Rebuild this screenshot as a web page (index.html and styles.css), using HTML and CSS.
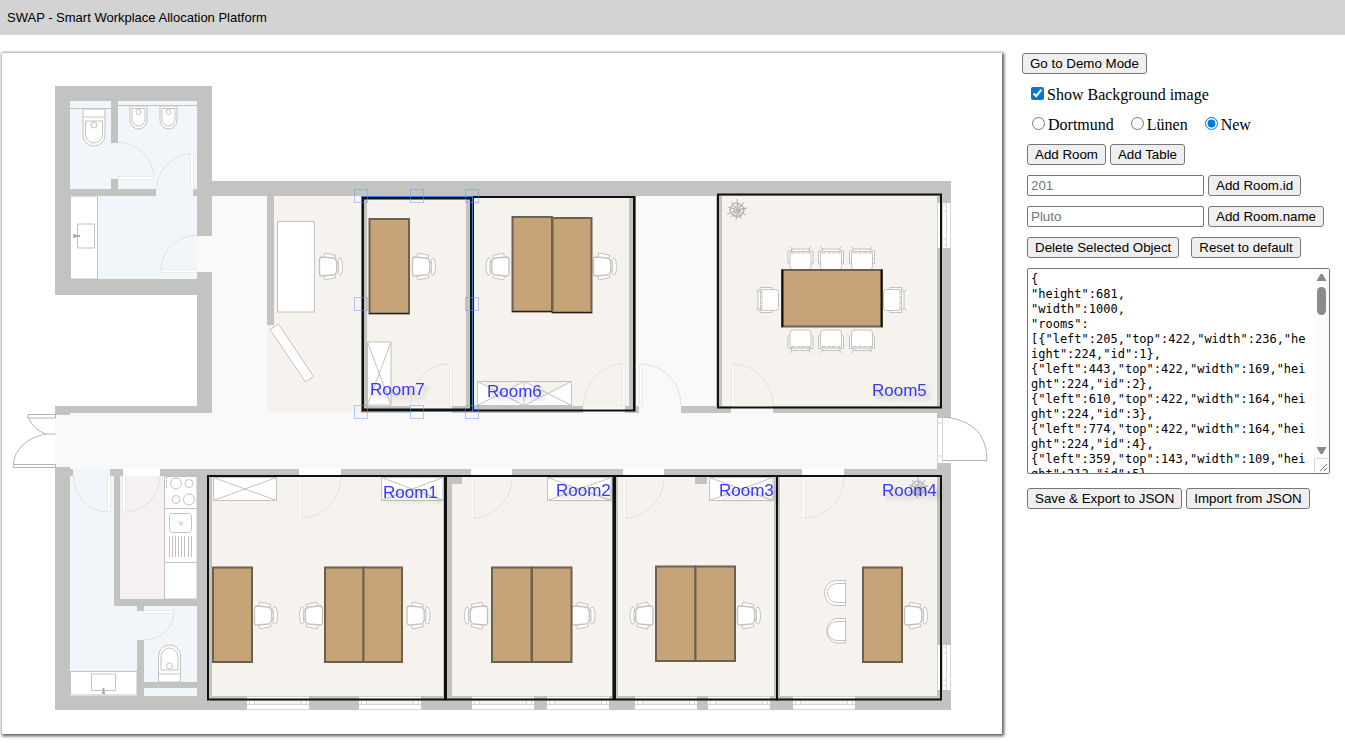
FILE: index.html
```html
<!DOCTYPE html>
<html lang="en">
<head>
<meta charset="utf-8">
<title>SWAP - Smart Workplace Allocation Platform</title>
<link rel="stylesheet" href="styles.css">
</head>
<body>
<header class="topbar">SWAP - Smart Workplace Allocation Platform</header>
<main class="workspace">
<svg class="plan" viewBox="2 53 1000 681" role="img" aria-label="Floor plan">
  <defs>
    <g id="chair" class="furn">
      <path d="M5-10L6-13.500L17-11L16-8.500M5 10L6 13.500L17 11L16 8.500"/>
      <path d="M19-7Q20-9 21.500-8.500Q23.500-6 23.500 0Q23.500 6 21.500 8.500Q20 9 19 7Q20.500 0 19-7ZM17.500-4H20M17.500 4H20"/>
      <path d="M3-9.500L14-8.500Q17-8 17.500-5Q18 0 17.500 5Q17 8 14 8.500L3 9.500Q.5 9.500 .5 6.500V-6.500Q.5-9.500 3-9.500Z" stroke-width="1.300"/>
    </g>
    <g id="meet" class="furn">
      <path d="M-9-20.500H9V-18H-9ZM-12.500-18.500H-10V-6H-12.500ZM12.500-18.500H10V-6H12.500ZM-10.500-23L-7.500-19.500M10.500-23L7.500-19.500"/>
      <rect x="-10.500" y="-18" width="21" height="18" rx="3"/>
      <path d="M-9-16.500H9" stroke-dasharray="4 1"/>
    </g>
    <g id="plant" class="plant">
      <circle r="7"/><circle r="3.500"/>
      <path d="M0-11L1 0L7-8M1 0L10-2L1 0L9 5M1 0L4 9M1 0L-1 10M1 0L-6 7M1 0L-10 4M1 0L-9-3M1 0L-6-8M-3-7L3-5L7-2L6 3L2 6L-4 5L-7 1L-5-4Z"/>
    </g>
    <g id="bidet" class="furn">
      <path d="M-8.500 0V14A8.500 9 0 0 0 8.500 14V0Z"/><path d="M-6.500 2.500H6.500V13A6.500 7 0 0 1-6.500 13Z"/><circle cy="6" r="2.500"/>
    </g>
    <g id="window">
      <path class="pane" d="M0 0H62V14H0Z"/>
      <path class="sill" d="M8 5H54V8H8Z"/>
      <path class="wline" d="M0 .5H62M0 4.500H62M0 8.500H62M2.500 4V9M7.500 4V9M54.500 4V9M59.500 4V9M0 13.500H62"/>
    </g>
    <g id="toilet" class="furn">
      <path d="M-11 0H11V26A11 11 0 0 1-11 26Z"/><path d="M-11 8H11M-8.500 12H8.500V25A8.500 9 0 0 1-8.500 25Z"/><circle cy="16" r="3"/>
    </g>
  </defs>

  <!-- floors -->
  <path class="hall" d="M212 196H268V413H937V469H55V413H212ZM629 196H722V413H629ZM937 413H943V463H937Z"/>
  <path class="water" d="M70 101H197V279H70ZM70 476H114V606H197V696H70Z"/>
  <path class="water" d="M73 469H110V476H73Z"/>
  <path class="kitchen" d="M120 476H197V599H120Z"/>
  <path class="office" d="M267 196H629V413H267ZM722 196H937V407H722ZM212 476H937V696H212Z"/>

  <!-- walls -->
  <path class="wall" fill-rule="evenodd" d="M55 86H212V181H951V418H937V196H212V236H197V101H70V279H197V272H212V413H70V415H55V406H197V295H55Z"/>
  <path class="wall" d="M55 467H70V469H73V476H70V696H951V710H55ZM937 463H951V710H937ZM111 101H118V143H111ZM111 179H118V190H111ZM70 189H156V196H70ZM193 189H197V196H193Z"/>
  <path class="wall" d="M267 196H274V325H267ZM361 196H367V413H361ZM466 196H474V413H466ZM629 196H636V413H629ZM716 196H722V413H716ZM361 406H410V413H361ZM452 406H583V413H452ZM625 406H639V413H625ZM681 406H731V413H681ZM773 406H951V413H773Z"/>
  <path class="wall" d="M110 469H123V476H110ZM160 469H299V476H160ZM341 469H471V476H341ZM512 469H623V476H512ZM664 469H802V476H664ZM844 469H951V476H844ZM114 476H120V606H114ZM114 599H197V606H114ZM197 476H212V696H197ZM137 606H144V611H137ZM137 640H144V696H137ZM144 682H197V688H144ZM443 476H452V696H443ZM447 476H462V484H447ZM612 476H618V696H612ZM695 476H707V484H695ZM774 476H780V696H774Z"/>
  <path class="hall" d="M197 236H212V272H197ZM583 407H625V413H583ZM639 407H681V413H639ZM410 407H449V413H410ZM731 407H773V413H731Z"/>
  <path class="water" d="M144 688H197V695H144Z"/>

  <!-- windows -->
  <use href="#window" x="247" y="696"/><use href="#window" x="359" y="696"/>
  <use href="#window" x="472" y="696"/><use href="#window" x="547" y="696"/>
  <use href="#window" x="635" y="696"/><use href="#window" x="708" y="696"/>
  <use href="#window" x="793" y="696"/>
  <path class="pane" d="M937 203H951V248H937ZM937 645H951V690H937ZM937 418H945V463H937Z"/>
  <path class="wline" d="M937.500 203V248M942.500 203V248M946.500 203V248M950.500 203V248M942 205H946M942 211H946M942 239H946M942 245H946M937.500 645V690M942.500 645V690M946.500 645V690M950.500 645V690M942 647H946M942 653H946M942 680H946M942 686H946M937.500 418V463M942.500 418V463M937 423H943M937 456H943"/>

  <!-- doors -->
  <path class="door" d="M118 142A37 37 0 0 1 154 176M156.500 190A36 36 0 0 1 190 154M161 270A35 35 0 0 1 197 235.500M410.500 406A38 42 0 0 1 449 364M583.500 406A40 42 0 0 1 622 364M642 364A40 42 0 0 1 681 406M734 364A40 42 0 0 1 773 406M73.500 476A35 36 0 0 0 108 512M125 512A35 36 0 0 0 160 476M302 518A40 41 0 0 0 341 477M474 518A40 41 0 0 0 512 477M626 518A40 41 0 0 0 664 477M805 518A40 41 0 0 0 844 477M174 613A30 28 0 0 1 144 640"/>
  <path class="leaf" d="M118 176.500H154V179.500H118ZM190.500 154H193.500V190H190.500ZM161 269.500H197V272.500H161ZM449.500 364H452V406H449.500ZM622.500 364H625V406H622.500ZM639.500 364H642V406H639.500ZM731.500 364H734V406H731.500ZM107.500 476H110.500V512H107.500ZM122.500 476H125.500V512H122.500ZM299 477H301.500V518H299ZM471 477H473.500V518H471ZM623 477H625.500V518H623ZM802 477H805V518H802ZM144 610.500H174V613.500H144Z"/>
  <path class="entry" d="M28 414.500H55.500V418H28ZM28.500 418Q34 430 46 434H55.500M13.500 464.500H55.500V467.500H13.500ZM13.500 464A42 32 0 0 1 46 434M943 417.500H948Q987 423 987 460.500H943"/>

  <!-- fixtures -->
  <path class="furn" d="M70.500 196H97.500V279H70.500ZM77.500 224H94.500V248H77.500ZM70.500 671.500H137V695H70.500ZM91.500 674H115.500V690.500H91.500Z"/>
  <path class="line" d="M70 108.500H111M118 105.500H197"/>
  <path class="tap" d="M73 236H80M74.500 234V238M103.500 688V694M102 693H105"/>
  <use href="#toilet" x="94" y="109"/>
  <use href="#bidet" x="138.500" y="106"/><use href="#bidet" x="168.500" y="106"/>
  <use href="#toilet" transform="translate(169.500 682) scale(1 -1)"/>
  <path class="furn" d="M164.500 476.500H197V599H164.500ZM164.500 508.500H197M164.500 562.500H197"/>
  <g class="furn"><circle cx="176" cy="483.500" r="5.500"/><circle cx="189" cy="483.500" r="4"/><circle cx="176" cy="499.500" r="4"/><circle cx="189" cy="499.500" r="5.500"/><rect x="169.500" y="513.500" width="22" height="19" rx="3"/><circle cx="181" cy="523.500" r="1.500"/></g>
  <path class="line" d="M169.500 536V557M172.500 536V557M175.500 536V557M178.500 536V557M181.500 536V557M184.500 536V557M188.500 536V557M191.500 536V557"/>
  <path class="line" stroke-dasharray="2 1" d="M166.500 477V488"/>
  <path class="furn" d="M277.500 221.500H314.500V312H277.500ZM270 329.500L278.500 324L313.500 376.500L305.500 382Z"/>
  <path class="furn" d="M367.500 342H391V405H367.500ZM367.500 342L391 405M391 342L367.500 405M477.500 381.500H571.500V405.500H477.500ZM477.500 381.500L524 405.500L571.500 381.500M477.500 405.500L524 381.500L571.500 405.500M524 381.500V405.500M213.500 477.500H276.500V500.500H213.500ZM213.500 477.500L276.500 500.500M276.500 477.500L213.500 500.500M381.500 477.500H443V500.500H381.500ZM381.500 477.500L443 500.500M443 477.500L381.500 500.500M547.500 477.500H611V500.500H547.500ZM547.500 477.500L611 500.500M611 477.500L547.500 500.500M709.500 477.500H773V500.500H709.500ZM709.500 477.500L773 500.500M773 477.500L709.500 500.500"/>
  <use href="#plant" x="737" y="210"/><use href="#plant" x="918" y="488"/>

  <!-- seats -->
  <use href="#chair" x="319" y="266.500"/><use href="#chair" x="412" y="266.500"/><use href="#chair" x="593" y="266.500"/>
  <use href="#chair" transform="translate(509.500 266.500) scale(-1 1)"/>
  <use href="#chair" x="254" y="615.500"/><use href="#chair" x="406.500" y="615.500"/><use href="#chair" x="571.500" y="615.500"/><use href="#chair" x="737" y="615.500"/><use href="#chair" x="904" y="615.500"/>
  <use href="#chair" transform="translate(323 615.500) scale(-1 1)"/><use href="#chair" transform="translate(488 615.500) scale(-1 1)"/><use href="#chair" transform="translate(653.500 615.500) scale(-1 1)"/>
  <use href="#meet" x="800.500" y="269.500"/><use href="#meet" x="831" y="269.500"/><use href="#meet" x="862" y="269.500"/>
  <use href="#meet" transform="translate(800.500 330) scale(1 -1)"/><use href="#meet" transform="translate(831 330) scale(1 -1)"/><use href="#meet" transform="translate(862 330) scale(1 -1)"/>
  <use href="#meet" transform="translate(778.500 300) rotate(-90)"/><use href="#meet" transform="translate(883.500 300) rotate(90)"/>
  <path class="furn" d="M845.500 580.500H836A11.500 12.500 0 0 0 836 605.500H845.500ZM845.500 583.500H837A9.500 9.500 0 0 0 837 602.500H845.500M845.500 618.500H836A11.500 12.500 0 0 0 836 643H845.500ZM845.500 621.500H837A9.500 9.500 0 0 0 837 640.500H845.500"/>

  <!-- tables -->
  <g class="table">
    <rect x="369.500" y="219" width="39.500" height="94.500"/>
    <rect x="512.500" y="217" width="39.500" height="94.500"/><rect x="552.500" y="218" width="39" height="94.500"/>
    <rect x="213" y="567.500" width="39" height="94.500"/><rect x="325" y="567.500" width="38.500" height="94.500"/><rect x="363.500" y="567.500" width="38.500" height="94.500"/>
    <rect x="492" y="567.500" width="39.500" height="94.500"/><rect x="532" y="567.500" width="39.500" height="94.500"/>
    <rect x="656" y="566.500" width="39.500" height="94.500"/><rect x="695.500" y="566.500" width="39.500" height="94.500"/>
    <rect x="863" y="567.500" width="39" height="94.500"/>
    <rect x="782" y="270" width="100" height="56.500"/>
  </g>
  <path class="room" d="M782.500 270V327M881.500 270V327"/>
  <path class="front" d="M369 313.500H409M512 311.500H552M552 312.500H592"/>

  <!-- rooms -->
  <g class="room">
    <rect x="208" y="476" width="237" height="223.500"/><rect x="446" y="476" width="167.500" height="223.500"/>
    <rect x="615" y="476" width="162" height="223.500"/><rect x="777" y="476" width="164" height="223.500"/>
    <rect x="718" y="194.500" width="223" height="213"/><rect x="473" y="197" width="161.500" height="213.500"/>
    <path d="M634 197V411"/>
    <rect class="room-sel" x="362.500" y="198" width="109" height="212"/>
  </g>
  <g class="select">
    <rect class="edge" x="361.500" y="196.500" width="111" height="215"/>
    <rect x="354.500" y="189.500" width="13" height="13"/><rect x="410.500" y="189.500" width="13" height="13"/><rect x="465.500" y="189.500" width="13" height="13"/>
    <rect x="354.500" y="297.500" width="13" height="13"/><rect x="465.500" y="297.500" width="13" height="13"/>
    <rect x="354.500" y="405.500" width="13" height="13"/><rect x="410.500" y="405.500" width="13" height="13"/><rect x="465.500" y="405.500" width="13" height="13"/>
  </g>
  <g class="names">
    <text x="370" y="395">Room7</text><text x="487" y="397">Room6</text><text x="872" y="396">Room5</text>
    <text x="383" y="498">Room1</text><text x="556" y="496">Room2</text><text x="719" y="496">Room3</text><text x="882" y="496">Room4</text>
  </g>
</svg>

<form class="panel">
  <div class="row demo"><button type="button">Go to Demo Mode</button></div>
  <div class="row options"><label><input type="checkbox" checked>Show Background image</label></div>
  <div class="row options radios">
    <label><input type="radio" name="plan">Dortmund</label>
    <label><input type="radio" name="plan">Lünen</label>
    <label><input type="radio" name="plan" checked>New</label>
  </div>
  <div class="row"><button type="button">Add Room</button><button type="button">Add Table</button></div>
  <div class="row"><input class="field" type="text" placeholder="201" aria-label="Room id"><button type="button">Add Room.id</button></div>
  <div class="row"><input class="field" type="text" placeholder="Pluto" aria-label="Room name"><button type="button">Add Room.name</button></div>
  <div class="row wide"><button type="button">Delete Selected Object</button><button type="button">Reset to default</button></div>
  <div class="json">
    <textarea aria-label="Layout JSON" spellcheck="false">{
"height":681,
"width":1000,
"rooms":
[{"left":205,"top":422,"width":236,"height":224,"id":1},
{"left":443,"top":422,"width":169,"height":224,"id":2},
{"left":610,"top":422,"width":164,"height":224,"id":3},
{"left":774,"top":422,"width":164,"height":224,"id":4},
{"left":359,"top":143,"width":109,"height":212,"id":5},</textarea>
    <svg class="scroll" viewBox="0 0 15 204" aria-hidden="true">
      <path fill="#fcfcfc" d="M0 0H15V204H0Z"/>
      <path fill="#8b8b8b" d="M2.500 12L6.500 5H8.500L12.500 12ZM2.500 178H12.500L8.500 185H6.500Z"/>
      <rect fill="#8b8b8b" x="3" y="18" width="9" height="28" rx="4.500"/>
      <path fill="none" stroke="#dcdcdc" d="M.5 204V189.500H15"/>
      <path fill="none" stroke="#777" d="M6 202L13 195M10 202L13 199"/>
    </svg>
  </div>
  <div class="row last"><button type="button">Save &amp; Export to JSON</button><button type="button">Import from JSON</button></div>
</form>
</main>
</body>
</html>
```
FILE: styles.css
```css
body {
  margin: 0;
  background: #fff;
  color: #000;
  font-family: "Liberation Serif", "Times New Roman", serif;
  font-size: 16px;
}
.topbar {
  padding: 0 7px;
  background: #d3d3d3;
  font-family: "Liberation Sans", Arial, sans-serif;
  font-size: 13px;
  line-height: 35px;
}
.workspace {
  display: flex;
  align-items: flex-start;
  gap: 20px;
  padding: 18px 0 8px 2px;
}
.plan {
  flex: 1 1 0;
  min-width: 0;
  background: #fff;
  box-shadow: 1px 1px 3px 1px #555;
}
.hall { fill: #f9f9f9; }
.water { fill: #f0f6f9; }
.kitchen { fill: #f6f0f0; }
.office { fill: #f6f3ee; }
.wall { fill: #c3c3c1; }
.pane { fill: #fff; }
.sill { fill: #f3f3f1; }
.wline { fill: none; stroke: #d4d4d2; }
.door { fill: none; stroke: #e2e2e0; }
.leaf { fill: #fff; stroke: #e9e9e6; }
.entry { fill: none; stroke: #b4b4b2; }
.furn { fill: #fff; stroke: #c2c2c0; }
.line { fill: none; stroke: #c2c2c0; }
.plant { fill: none; stroke: #b4b4b2; }
.tap { fill: none; stroke: #aaa; stroke-width: 2; }
.table { fill: #c7a378; stroke: #6a6151; stroke-width: 2; }
.room { fill: none; stroke: #111; stroke-width: 2; }
.front { fill: none; stroke: #222; }
.room-sel { stroke-width: 3; }
.select { fill: none; stroke: #6699ff; stroke-opacity: .5; }
.edge { stroke: #3d7bea; stroke-opacity: 1; }
.names {
  fill: #2222ff;
  fill-opacity: .9;
  font-family: "Liberation Sans", Arial, sans-serif;
  font-size: 17px;
  filter: drop-shadow(4px 4px 2px rgba(0, 0, 0, .2));
}
.panel {
  flex: 0 0 318px;
  display: flex;
  flex-direction: column;
  gap: 10px;
  padding-left: 5px;
}
.row { display: flex; align-items: center; gap: 4px; }
.demo { margin-left: -5px; }
.wide { gap: 12px; }
.last { margin-top: 4px; }
.options { height: 20px; padding: 0 4px; }
.radios { gap: 17px; padding: 0 5px; }
.options label { display: flex; align-items: center; gap: 3px; padding-top: 2px; }
.options input { width: 13px; height: 13px; margin: 0 0 3px; accent-color: #0078d7; }
.row button {
  height: 21px;
  padding: 0 7px;
  border: 1px solid #767676;
  border-radius: 3px;
  background: #efefef;
  color: #000;
  font-family: "Liberation Sans", Arial, sans-serif;
  white-space: nowrap;
}
.field {
  box-sizing: border-box;
  width: 177px;
  height: 21px;
  padding: 1px 3px;
  border: 1px solid #767676;
  border-radius: 2px;
  font-family: "Liberation Sans", Arial, sans-serif;
}
.json { position: relative; width: 303px; }
.json textarea {
  display: block;
  box-sizing: border-box;
  width: 100%;
  height: 206px;
  padding: 3px 22px 2px 3px;
  border: 1px solid #767676;
  border-radius: 2px;
  font-family: "DejaVu Sans Mono", Consolas, monospace;
  font-size: 12px;
  line-height: 15px;
  word-break: break-all;
  overflow: hidden;
  resize: none;
}
.scroll { position: absolute; top: 1px; right: 1px; width: 15px; height: 204px; }
```
